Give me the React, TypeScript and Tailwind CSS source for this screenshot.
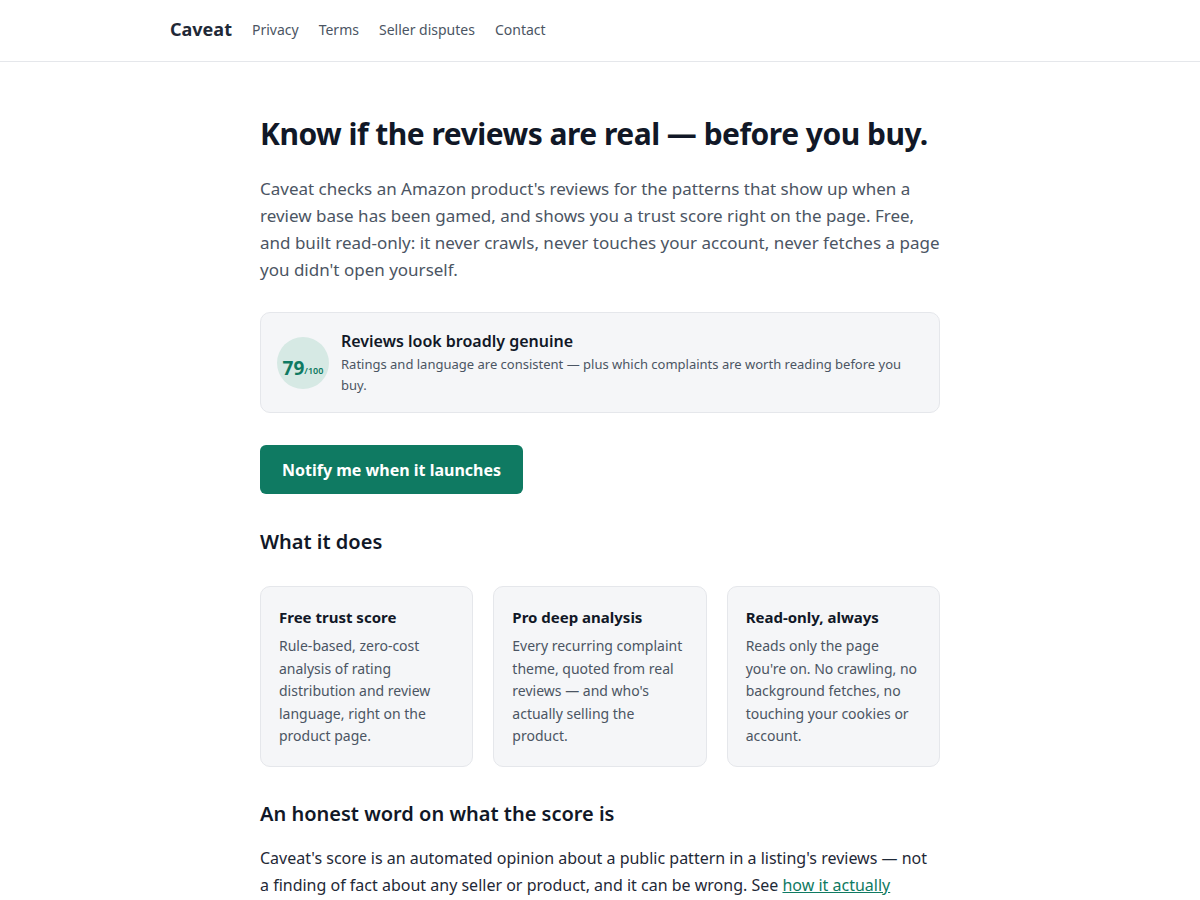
import React from 'react';

const features = [
  {
    title: 'Free trust score',
    body: 'Rule-based, zero-cost analysis of rating distribution and review language, right on the product page.',
  },
  {
    title: 'Pro deep analysis',
    body: "Every recurring complaint theme, quoted from real reviews — and who's actually selling the product.",
  },
  {
    title: 'Read-only, always',
    body: "Reads only the page you're on. No crawling, no background fetches, no touching your cookies or account.",
  },
];

export default function App() {
  return (
    <div className="min-h-screen bg-white text-[#111827] font-['Noto_Sans',sans-serif]">
      {/* Header */}
      <header className="border-b border-[#e5e7eb]">
        <nav className="mx-auto flex h-[61px] max-w-[860px] items-center gap-5 pb-[2px]">
          <span className="text-[18px] font-bold text-[#1f2937]">Caveat</span>
          <a className="text-[14px] text-[#4b5563]">Privacy</a>
          <a className="text-[14px] text-[#4b5563]">Terms</a>
          <a className="text-[14px] text-[#4b5563]">Seller disputes</a>
          <a className="text-[14px] text-[#4b5563]">Contact</a>
        </nav>
      </header>

      <main className="mx-auto max-w-[680px] pt-[54px]">
        {/* Hero */}
        <h1 className="text-[30px] font-bold leading-[1.2] tracking-[-0.017em] text-[#111827]">
          Know if the reviews are real — before you buy.
        </h1>
        <p className="mt-[23px] text-[17px] leading-[27px] text-[#4b5563]">
          Caveat checks an Amazon product's reviews for the patterns that show up when a review base has been
          gamed, and shows you a trust score right on the page. Free, and built read-only: it never crawls, never
          touches your account, never fetches a page you didn't open yourself.
        </p>

        {/* Score preview */}
        <div className="mt-[29px] flex items-center gap-3 rounded-[10px] border border-[#e5e7eb] bg-[#f5f6f8] px-4 pb-[16px] pt-[17px]">
          <div className="flex h-[52px] w-[52px] shrink-0 items-center justify-center rounded-full bg-[#d6e9e4] pt-[10px]">
            <span className="text-[19px] font-bold text-[#0f7a62]">79</span>
            <span className="mt-[6px] text-[9px] font-semibold text-[#0f7a62]">/100</span>
          </div>
          <div>
            <div className="text-[16px] font-semibold leading-[22px] text-[#111827]">Reviews look broadly genuine</div>
            <div className="mt-[2px] text-[13px] leading-[21px] text-[#4b5563]">
              Ratings and language are consistent — plus which complaints are worth reading before you buy.
            </div>
          </div>
        </div>

        <button className="mt-8 h-[49px] rounded-md bg-[#0f7a62] px-[22px] text-[16px] font-bold text-white">
          Notify me when it launches
        </button>

        {/* What it does */}
        <h2 className="mt-[33px] text-[20px] font-semibold text-[#111827]">What it does</h2>
        <div className="mt-[29px] grid grid-cols-3 gap-5">
          {features.map((f) => (
            <div key={f.title} className="rounded-[10px] border border-[#e5e7eb] bg-[#f5f6f8] px-[18px] pb-[18px] pt-[19px]">
              <div className="text-[15px] font-bold leading-[22px] text-[#111827]">{f.title}</div>
              <p className="mt-[7px] text-[14px] leading-[22.5px] text-[#4b5563]">{f.body}</p>
            </div>
          ))}
        </div>

        {/* Honest word */}
        <h2 className="mt-[32px] text-[20px] font-semibold text-[#111827]">An honest word on what the score is</h2>
        <p className="mt-[16px] pr-[4px] text-[16px] leading-[27px] text-[#1f2937]">
          Caveat's score is an automated opinion about a public pattern in a listing's reviews — not a finding of
          fact about any seller or product, and it can be wrong. See{' '}
          <a className="text-[#0f7a62] underline">how it actually works</a> for exactly what is and isn't being
          measured.
        </p>
      </main>
    </div>
  );
}
